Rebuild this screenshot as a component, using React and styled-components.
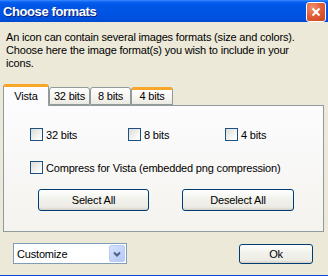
import React from "react";
import styled, { createGlobalStyle } from "styled-components";

const Global = createGlobalStyle`
  html, body { margin: 0; padding: 0; overflow: hidden; }
  body { font-family: "Liberation Sans", Arial, sans-serif; font-size: 11px; color: #000; letter-spacing: -0.18px; }
`;

const Window = styled.div`
  width: 328px;
  height: 276px;
  box-sizing: border-box;
  background: #ece9d8;
  border-bottom: 1px solid #0b44d8;
  display: flex;
  flex-direction: column;
`;

const TitleBar = styled.div`
  height: 22px;
  flex: none;
  display: flex;
  align-items: center;
  justify-content: space-between;
  padding: 0 2px 0 3px;
  background: linear-gradient(#3a8cff 0px, #0a60f0 2px, #0056e6 5px, #0054e3 14px, #0050da 20px, #0048cc 22px);
`;

const Title = styled.span`
  color: #fff;
  font-weight: bold;
  font-size: 13px;
  letter-spacing: -0.4px;
  text-shadow: 1px 1px 0 #0a1e7a;
  padding-top: 1px;
`;

const CloseBtn = styled.div`
  width: 20px;
  height: 20px;
  box-sizing: border-box;
  border: 1px solid #fff;
  border-radius: 3px;
  background: radial-gradient(circle at 30% 25%, #f0906e 0%, #e2603a 45%, #c8401c 100%);
  display: flex;
  align-items: center;
  justify-content: center;
  margin-top: 1px;
`;

const Intro = styled.p`
  margin: 9px 6px 0 6px;
  line-height: 13px;
  font-size: 11px;
`;

const TabStrip = styled.div`
  display: flex;
  align-items: flex-end;
  margin: 13px 0 0 3px;
  height: 22px;
  position: relative;
  z-index: 1;
`;

const Tab = styled.div`
  box-sizing: border-box;
  width: ${(p) => p.$w}px;
  height: ${(p) => (p.$active ? 22 : 18)}px;
  border: 1px solid #919b9c;
  border-bottom: ${(p) => (p.$active ? "none" : "1px solid #919b9c")};
  border-top: ${(p) => (p.$hot || p.$active ? "3px solid #f7a628" : "1px solid #919b9c")};
  border-radius: 3px 3px 0 0;
  background: ${(p) => (p.$active ? "#fcfcfe" : "linear-gradient(#ffffff, #f3f2ec 70%, #e9e8e1)")};
  display: flex;
  align-items: ${(p) => (p.$active ? "flex-start" : "center")};
  justify-content: center;
  padding-top: ${(p) => (p.$active ? "3px" : "0")};
  padding-bottom: ${(p) => (p.$hot ? "2px" : "0")};
  font-size: 11px;
  margin-bottom: ${(p) => (p.$active ? "-1px" : "0")};
`;

const Panel = styled.div`
  margin: 0 4px 0 3px;
  height: 127px;
  box-sizing: border-box;
  border: 1px solid #919b9c;
  background: linear-gradient(#fcfcfe, #f4f3ee);
  padding: 22px 0 0 26px;
  display: flex;
  flex-direction: column;
`;

const CheckRow = styled.div`
  display: grid;
  grid-template-columns: 98px 97px auto;
  margin-bottom: ${(p) => p.$gap || 0}px;
`;

const Check = styled.label`
  display: flex;
  align-items: center;
  height: 13px;
  gap: 3px;
  white-space: nowrap;
`;

const Box = styled.span`
  width: 13px;
  height: 13px;
  box-sizing: border-box;
  border: 1px solid #1c5180;
  background: linear-gradient(135deg, #dcdcd7, #fbfbf9 80%);
  flex: none;
`;

const ButtonRow = styled.div`
  display: flex;
  gap: 33px;
  margin: 15px 0 0 8px;
`;

const XPButton = styled.div`
  box-sizing: border-box;
  width: ${(p) => p.$w}px;
  height: ${(p) => p.$h || 22}px;
  border: 1px solid #003c74;
  border-radius: 3px;
  background: linear-gradient(#ffffff, #f3f3ee 40%, #ecebe4 85%, #d6d0c5);
  display: flex;
  align-items: center;
  justify-content: center;
  font-size: 11px;
`;

const Footer = styled.div`
  display: flex;
  justify-content: space-between;
  align-items: flex-start;
  margin: 11px 15px 0 13px;
`;

const Select = styled.div`
  width: 114px;
  height: 21px;
  box-sizing: border-box;
  border: 1px solid #7f9db9;
  background: #fff;
  display: flex;
  align-items: center;
  justify-content: space-between;
  padding: 1px 1px 1px 3px;
`;

const Arrow = styled.div`
  width: 16px;
  height: 17px;
  box-sizing: border-box;
  border: 1px solid #b9ccf7;
  border-radius: 2px;
  background: linear-gradient(135deg, #d6e2fd, #b4c8f6);
  display: flex;
  align-items: center;
  justify-content: center;
`;

const OkWrap = styled.div`
  margin-top: 1px;
`;

export default function App() {
  return (
    <Window>
      <Global />
      <TitleBar>
        <Title>Choose formats</Title>
        <CloseBtn>
          <svg width="10" height="10" viewBox="0 0 10 10">
            <path d="M1.5 1.5L8.5 8.5M8.5 1.5L1.5 8.5" stroke="#fff" strokeWidth="2" />
          </svg>
        </CloseBtn>
      </TitleBar>
      <Intro>
        An icon can contain several images formats (size and colors).
        <br />
        Choose here the image format(s) you wish to include in your
        <br />
        icons.
      </Intro>
      <TabStrip>
        <Tab $active $w={46}>Vista</Tab>
        <Tab $w={41}>32 bits</Tab>
        <Tab $w={41}>8 bits</Tab>
        <Tab $hot $w={42}>4 bits</Tab>
      </TabStrip>
      <Panel>
        <CheckRow $gap={20}>
          <Check><Box />32 bits</Check>
          <Check><Box />8 bits</Check>
          <Check><Box />4 bits</Check>
        </CheckRow>
        <CheckRow>
          <Check><Box />Compress for Vista (embedded png compression)</Check>
        </CheckRow>
        <ButtonRow>
          <XPButton $w={111}>Select All</XPButton>
          <XPButton $w={112}>Deselect All</XPButton>
        </ButtonRow>
      </Panel>
      <Footer>
        <Select>
          <span>Customize</span>
          <Arrow>
            <svg width="8" height="6" viewBox="0 0 8 6">
              <path d="M1 1.5L4 4.5L7 1.5" stroke="#4d6185" strokeWidth="2" fill="none" />
            </svg>
          </Arrow>
        </Select>
        <OkWrap>
          <XPButton $w={74} $h={20}>Ok</XPButton>
        </OkWrap>
      </Footer>
    </Window>
  );
}
